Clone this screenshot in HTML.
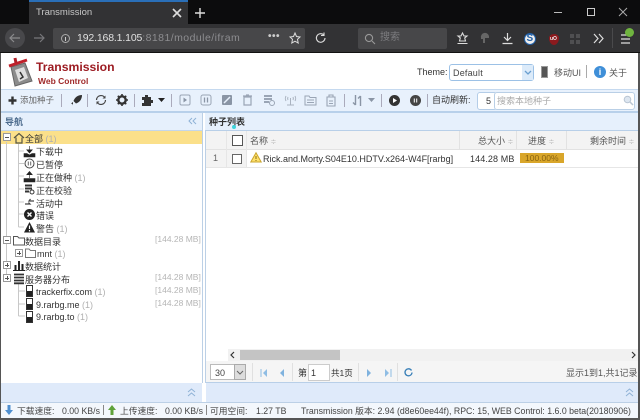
<!DOCTYPE html>
<html><head><meta charset="utf-8"><style>
html,body{margin:0;padding:0;background:#fff}
#p{position:relative;width:640px;height:420px;overflow:hidden;background:#fff;font-family:"Liberation Sans","Noto Sans CJK SC",sans-serif;font-size:9px;color:#333;filter:blur(.35px)}
.a{position:absolute}
.t{position:absolute;white-space:nowrap;line-height:12px}
.g{color:#b0b0b0}
.r{font-size:9px;color:#333}
.m{font-size:8.5px;color:#b5b5b5}
.s{font-size:8.75px;color:#444;top:405px}
svg{position:absolute;overflow:visible}
.sep{position:absolute;width:1px;height:13px;top:94px;background:#aab}
.b{position:absolute;width:6px;height:6px;border:1px solid #999;background:#fff}
.b::after{content:"";position:absolute;left:1px;top:2.5px;width:4px;height:1px;background:#555}
.c::before{content:"";position:absolute;left:2.5px;top:1px;width:1px;height:4px;background:#555}
</style></head><body><div id="p">
<!-- browser chrome -->
<div class="a" style="left:0;top:0;width:640px;height:24px;background:#0c0c0d"></div>
<div class="a" style="left:29px;top:0;width:159px;height:24px;background:#323234"></div>
<div class="a" style="left:29px;top:0;width:159px;height:2px;background:#2a6fb8"></div>
<div class="t" style="left:36px;top:7px;color:#c8c8c8;font-size:9.5px">Transmission</div>
<svg style="left:172px;top:8px" width="10" height="10"><path d="M1 1L9 9M9 1L1 9" stroke="#ddd" stroke-width="1.6"/></svg>
<svg style="left:194px;top:7px" width="12" height="12"><path d="M6 1V11M1 6H11" stroke="#ddd" stroke-width="1.4"/></svg>
<div class="a" style="left:554px;top:12px;width:8px;height:1px;background:#bbb"></div>
<div class="a" style="left:587px;top:8px;width:6px;height:6px;border:1px solid #ccc"></div>
<svg style="left:619px;top:8px" width="8" height="8"><path d="M0 0L8 8M8 0L0 8" stroke="#aaa" stroke-width="1"/></svg>
<div class="a" style="left:0;top:24px;width:640px;height:29px;background:#323234"></div>
<div class="a" style="left:0;top:52px;width:640px;height:1px;background:#111"></div>
<div class="a" style="left:5px;top:28px;width:20px;height:20px;border-radius:50%;background:#48484b"></div>
<svg style="left:9px;top:32px" width="12" height="12"><path d="M11 6H1M5 2L1 6L5 10" fill="none" stroke="#8a8a8c" stroke-width="1.2"/></svg>
<svg style="left:33px;top:32px" width="12" height="12"><path d="M1 6H11M7 2L11 6L7 10" fill="none" stroke="#77777a" stroke-width="1.2"/></svg>
<div class="a" style="left:53px;top:28px;width:252px;height:21px;background:#474749;border-radius:2px"></div>
<svg style="left:60px;top:33px" width="11" height="11"><circle cx="5.5" cy="5.5" r="4" fill="none" stroke="#aaa"/><path d="M5.5 4V8" stroke="#ccc"/></svg>
<div class="t" style="left:77px;top:32px;font-size:10.5px;color:#e0e0e0"><span style="letter-spacing:-.15px">192.168.1.105</span><span style="color:#8d8d90;letter-spacing:.45px">:8181/module/ifram</span></div>
<div class="t" style="left:268px;top:31px;font-size:10px;color:#ccc;letter-spacing:.5px;font-weight:bold">•••</div>
<svg style="left:289px;top:32px" width="12" height="12"><path d="M6 1L7.5 4.5L11 5L8.5 7.3L9.2 11L6 9.2L2.8 11L3.5 7.3L1 5L4.5 4.5Z" fill="none" stroke="#ddd"/></svg>
<svg style="left:315px;top:32px" width="12" height="12"><path d="M10 6A4.3 4.3 0 1 1 8.5 2.7M9 .5V3.5H6" fill="none" stroke="#ddd" stroke-width="1.1"/></svg>
<div class="a" style="left:358px;top:28px;width:89px;height:21px;background:#474749;border-radius:2px"></div>
<svg style="left:364px;top:33px" width="12" height="12"><circle cx="5" cy="5" r="3.6" fill="none" stroke="#999" stroke-width="1.1"/><path d="M8 8L11 11" stroke="#999" stroke-width="1.1"/></svg>
<div class="t" style="left:380px;top:32px;color:#7c7c7f;font-size:10px">搜索</div>
<svg style="left:456px;top:32px" width="13" height="13"><path d="M6.5 1L8 4H11L8.7 6L9.5 9H3.5L4.3 6L2 4H5ZM1.5 11.5H11.5" fill="none" stroke="#ddd" stroke-width="1.1"/></svg>
<svg style="left:479px;top:32px" width="12" height="13"><path d="M2 6A4 4 0 0 1 10 4V6H6V11H4V7H2Z" fill="#666"/></svg>
<svg style="left:501px;top:32px" width="13" height="13"><path d="M6.5 1V8M3 5L6.5 8.5L10 5M1.5 11.5H11.5" fill="none" stroke="#ddd" stroke-width="1.2"/></svg>
<div class="a" style="left:524px;top:33px;width:12px;height:12px;border-radius:50%;background:#eee;border:1px solid #1f5fa8;box-sizing:border-box"></div>
<div class="t" style="left:526.5px;top:33px;font-weight:bold;font-size:10px;color:#1f5fa8">S</div>
<div class="a" style="left:549px;top:34px;width:10px;height:11px;border-radius:50% 50% 50% 50%/35% 35% 65% 65%;background:#8b1a1e"></div>
<div class="t" style="left:550px;top:33px;font-size:5px;color:#eee;font-weight:bold">uO</div>
<div class="a" style="left:570px;top:34px;width:4px;height:4px;background:#4f4f51;box-shadow:6px 0 #4f4f51,0 6px #4f4f51,6px 6px #4f4f51"></div>
<svg style="left:593px;top:33px" width="11" height="11"><path d="M1 1L5 5.5L1 10M6 1L10 5.5L6 10" fill="none" stroke="#ddd" stroke-width="1.2"/></svg>
<div class="a" style="left:612px;top:28px;width:1px;height:20px;background:#4a4a4c"></div>
<svg style="left:621px;top:33px" width="10" height="12"><path d="M0 2H9M0 6H9M0 10H9" stroke="#ddd" stroke-width="1.2"/></svg>
<div class="a" style="left:625px;top:28px;width:9px;height:9px;border-radius:50%;background:#6fb43f"></div>

<!-- frame -->
<div class="a" style="left:0;top:53px;width:1px;height:367px;background:#555"></div>
<div class="a" style="left:638px;top:53px;width:2px;height:367px;background:#555"></div>
<div class="a" style="left:0;top:418px;width:640px;height:2px;background:#555"></div>

<!-- logo -->
<svg style="left:7px;top:57px" width="26" height="30" viewBox="0 0 26 30">
<path d="M4 10L18 6L25 24L8 29Z" fill="#8c8c8c" stroke="#666"/>
<path d="M8 13L17 10L21 21L12 25Z" fill="#dedede"/>
<path d="M13 15L16 20L13 22" fill="none" stroke="#333" stroke-width="1.5"/>
<path d="M2 9L20 3" stroke="#c0202a" stroke-width="3"/>
<path d="M9 6L8 1" stroke="#b02028" stroke-width="3"/>
</svg>
<div class="t" style="left:36px;top:60px;font-size:12.2px;line-height:15px;font-weight:bold;color:#9c1b22">Transmission</div>
<div class="t" style="left:38px;top:75px;font-size:8.5px;font-weight:bold;color:#a02a2a">Web Control</div>
<div class="t" style="left:417px;top:66px;font-size:9px;color:#333">Theme:</div>
<div class="a" style="left:449px;top:64px;width:85px;height:17px;box-sizing:border-box;border:1px solid #9cc1e6;border-radius:3px;background:#fff"></div>
<div class="t" style="left:453px;top:67px;font-size:9px;letter-spacing:.2px;color:#444">Default</div>
<div class="a" style="left:522px;top:65px;width:11px;height:15px;background:#dcebfa"></div>
<svg style="left:524px;top:70px" width="8" height="6"><path d="M1 1L4 4L7 1" fill="none" stroke="#6a9fd0" stroke-width="1.3"/></svg>
<div class="a" style="left:541px;top:66px;width:7px;height:12px;background:#555;border:1px solid #999;box-sizing:border-box"></div>
<div class="t" style="left:554px;top:67px;font-size:9px;color:#555">移动UI</div>
<div class="a" style="left:586px;top:65px;width:1px;height:13px;background:#aaa"></div>
<div class="a" style="left:594px;top:66px;width:12px;height:12px;border-radius:50%;background:#3f8fd8;color:#fff;font-size:9px;line-height:12px;text-align:center;font-weight:bold">i</div>
<div class="t" style="left:609px;top:67px;font-size:9px;color:#555">关于</div>

<!-- toolbar -->
<div class="a" style="left:1px;top:89px;width:637px;height:24px;background:#e8f1fc;border-top:1px solid #c5d9ef;border-bottom:2px solid #b8d0ea;box-sizing:border-box"></div>
<svg style="left:8px;top:96px" width="9" height="9"><path d="M4.5 .5V8.5M.5 4.5H8.5" stroke="#333" stroke-width="2.4"/></svg>
<div class="t" style="left:20px;top:94px;font-size:8.5px;color:#666">添加种子</div>
<div class="sep" style="left:61px"></div>
<svg style="left:70px;top:94px" width="13" height="13"><path d="M12 1C8 1 5 3 3.5 7L6 9.5C10 8 12 5 12 1ZM3 8L1 9.5L2.5 10L3 11.5Z" fill="#333"/></svg>
<div class="sep" style="left:87px"></div>
<svg style="left:95px;top:94px" width="12" height="12"><path d="M1.500 6A4.500 4.500 0 0 1 10 4M10.500 6A4.500 4.500 0 0 1 2 8" fill="none" stroke="#444" stroke-width="1.2"/><path d="M10.500 1.500V4.500H7.500M1.500 10.500V7.500H4.500" fill="#444"/></svg>
<svg style="left:116px;top:94px" width="12" height="12"><circle cx="6" cy="6" r="3.7" fill="none" stroke="#333" stroke-width="2.4"/><path d="M6 0V12M0 6H12M1.800 1.800L10.200 10.200M10.200 1.800L1.800 10.200" stroke="#333" stroke-width="1.6" stroke-dasharray="2 8 2 0"/></svg>
<div class="sep" style="left:134px"></div>
<svg style="left:141px;top:94px" width="12" height="12"><path d="M1 3H4V1H7V3H10V6H12V9H10V12H1V9H3V6H1Z" fill="#333"/></svg>
<svg style="left:158px;top:98px" width="7" height="4"><path d="M0 0H7L3.5 4Z" fill="#222"/></svg>
<div class="sep" style="left:171px"></div>
<svg style="left:179px;top:94px" width="12" height="12"><rect x="1" y="1" width="10" height="10" rx="1.5" fill="none" stroke="#9aa5b5"/><path d="M4.500 3.500L8 6L4.500 8.500Z" fill="#8a95a5"/></svg>
<svg style="left:200px;top:94px" width="12" height="12"><rect x="1" y="1" width="10" height="10" rx="2" fill="none" stroke="#9aa5b5"/><path d="M4.500 3.500V8.500M7.500 3.500V8.500" stroke="#8a95a5" stroke-width="1.3"/></svg>
<svg style="left:221px;top:94px" width="12" height="12"><rect x="1" y="1" width="10" height="10" rx="1" fill="#8a95a5"/><path d="M3 9L9 3" stroke="#e8f1fc" stroke-width="1.5"/></svg>
<svg style="left:242px;top:94px" width="11" height="12"><path d="M2 3H9V11H2ZM1 2H10M4 1H7" fill="none" stroke="#9aa5b5" stroke-width="1.2"/></svg>
<svg style="left:263px;top:94px" width="13" height="13"><path d="M1 2H9M1 5H9M1 8H6" stroke="#9aa5b5" stroke-width="2"/><circle cx="9" cy="9" r="2.5" fill="none" stroke="#9aa5b5"/></svg>
<svg style="left:284px;top:94px" width="13" height="13"><path d="M6.500 4V11M3 11H10M2 2C1 4 1 5 2 7M11 2C12 4 12 5 11 7M4 3C3.500 4 3.500 5 4 6M9 3C9.500 4 9.500 5 9 6" fill="none" stroke="#aab3c0"/></svg>
<svg style="left:304px;top:94px" width="13" height="13"><path d="M1 2H5L6 3.500H12V11H1ZM3 6H10M3 8.500H10" fill="none" stroke="#9aa5b5"/></svg>
<svg style="left:325px;top:94px" width="12" height="13"><path d="M2 3H10V12H2ZM4 3V1H8V3M4 7H8M4 9.500H8" fill="none" stroke="#9aa5b5" stroke-width="1.1"/></svg>
<div class="sep" style="left:344px"></div>
<svg style="left:352px;top:94px" width="12" height="13"><path d="M3.500 1V11M1 8.500L3.500 11M8.500 12V2M6 4.500L8.500 2" fill="none" stroke="#8a95a5" stroke-width="1.4"/></svg>
<svg style="left:368px;top:98px" width="7" height="4"><path d="M0 0H7L3.5 4Z" fill="#8a95a5"/></svg>
<div class="sep" style="left:381px"></div>
<div class="a" style="left:389px;top:95px;width:11px;height:11px;border-radius:50%;background:#333"></div>
<svg style="left:389px;top:95px" width="11" height="11"><path d="M4 3L8 5.500L4 8Z" fill="#fff"/></svg>
<div class="a" style="left:410px;top:95px;width:11px;height:11px;border-radius:50%;background:#444"></div>
<svg style="left:410px;top:95px" width="11" height="11"><path d="M4.300 3.500V7.500M6.700 3.500V7.500" stroke="#fff"/></svg>
<div class="sep" style="left:427px"></div>
<div class="t" style="left:432px;top:94px;font-size:9px;color:#333">自动刷新:</div>
<div class="a" style="left:477px;top:92px;width:20px;height:18px;box-sizing:border-box;border:1px solid #b4cde8;border-radius:3px;background:#fff"></div>
<div class="t" style="left:486px;top:95px;font-size:9px">5</div>
<div class="a" style="left:494px;top:92px;width:141px;height:18px;box-sizing:border-box;border:1px solid #b9cfe6;border-radius:3px;background:#fff"></div>
<div class="t" style="left:497px;top:95px;font-size:9px;color:#aaa">搜索本地种子</div>
<svg style="left:623px;top:95px" width="11" height="11"><circle cx="4.5" cy="4.5" r="3.3" fill="#dde6f0" stroke="#b8c5d3"/><path d="M7 7L10 10" stroke="#b8c5d3" stroke-width="1.5"/></svg>

<!-- left panel -->
<div class="a" style="left:1px;top:113px;width:201px;height:17px;background:#e6f0fc"></div>
<div class="t" style="left:5px;top:116px;font-size:9px;font-weight:bold;color:#4b6a8c">导航</div>
<svg style="left:188px;top:117px" width="9" height="8"><path d="M4 1L1 4L4 7M8 1L5 4L8 7" fill="none" stroke="#8fb2d6"/></svg>
<div class="a" style="left:1px;top:130px;width:201px;height:1px;background:#c4d6ea"></div>
<div class="a" style="left:1px;top:131px;width:201px;height:13px;background:#fbe08a"></div>
<div class="a" style="left:202px;top:113px;width:1px;height:270px;background:#bcd0e6"></div>
<svg style="left:0;top:0" width="100" height="330"><path d="M6.500 142V278M18.500 144V227M18.500 151H24M18.500 163.500H24M18.500 176H24M18.500 189H24M18.500 202H24M18.500 214H24M18.500 227H24M18.500 284V316M18.500 291H25M18.500 304H25M18.500 316H25" fill="none" stroke="#c8c8c8" stroke-width="1"/></svg>
<div class="b" style="left:3px;top:133px"></div>
<svg style="left:13px;top:132px" width="12" height="12"><path d="M1 6L6 1.500L11 6M3 5.500V11H9V5.500" fill="none" stroke="#554" stroke-width="1.2"/></svg>
<div class="t r" style="left:25px;top:133px">全部 <span class="g">(1)</span></div>

<svg style="left:24px;top:146px" width="11" height="11"><path d="M5.500 0V6M2.500 3.500L5.500 7L8.500 3.500M0 7.500H3L5.500 9L8 7.500H11V11H0Z" fill="#222" stroke="#222" stroke-width=".6"/></svg>
<div class="t r" style="left:36px;top:146px">下载中</div>
<svg style="left:24px;top:158px" width="11" height="11"><circle cx="5.5" cy="5.5" r="4.5" fill="#fff" stroke="#444"/><path d="M4.300 3.500V7.500M6.700 3.500V7.500" stroke="#666"/></svg>
<div class="t r" style="left:36px;top:159px">已暂停</div>
<svg style="left:24px;top:171px" width="11" height="11"><path d="M5.500 7V1M2.500 4L5.500 .5L8.500 4M0 7.500H11V11H0Z" fill="#222" stroke="#222" stroke-width=".6"/></svg>
<div class="t r" style="left:36px;top:172px">正在做种 <span class="g">(1)</span></div>
<svg style="left:24px;top:184px" width="11" height="11"><path d="M1 1.500H8M1 4.500H8M1 7.500H5" stroke="#333" stroke-width="2"/><circle cx="8" cy="8" r="2" fill="#fff" stroke="#333"/></svg>
<div class="t r" style="left:36px;top:185px">正在校验</div>
<svg style="left:24px;top:197px" width="11" height="11"><path d="M1 7H6L4.500 5.500M10 4H5L6.500 2" fill="none" stroke="#444" stroke-width="1.2"/></svg>
<div class="t r" style="left:36px;top:198px">活动中</div>
<div class="a" style="left:24px;top:209px;width:11px;height:11px;border-radius:50%;background:#222"></div>
<svg style="left:24px;top:209px" width="11" height="11"><path d="M3.500 3.500L7.500 7.500M7.500 3.500L3.500 7.500" stroke="#fff" stroke-width="1.4"/></svg>
<div class="t r" style="left:36px;top:210px">错误</div>
<svg style="left:24px;top:222px" width="11" height="11"><path d="M5.500 0L11 10.500H0Z" fill="#222"/><path d="M5.500 3.500V7M5.500 8V9.500" stroke="#fff" stroke-width="1.2"/></svg>
<div class="t r" style="left:36px;top:223px">警告 <span class="g">(1)</span></div>

<div class="b" style="left:3px;top:236px"></div>
<svg style="left:13px;top:235px" width="12" height="11"><path d="M.5 1.500H4.500L6 3H11.500V10H.5Z" fill="#fff" stroke="#555"/></svg>
<div class="t r" style="left:25px;top:236px">数据目录</div>
<div class="t m" style="left:155px;top:233px">[144.28 MB]</div>
<div class="b c" style="left:15px;top:249px"></div>
<svg style="left:25px;top:248px" width="11" height="10"><path d="M.5 1H4L5.500 2.500H10.500V9.500H.5Z" fill="#fff" stroke="#777"/></svg>
<div class="t r" style="left:37px;top:248px">mnt <span class="g">(1)</span></div>
<div class="b c" style="left:3px;top:261px"></div>
<svg style="left:13px;top:260px" width="12" height="11"><path d="M2.500 5V10M6 1V10M9.500 4V10" stroke="#222" stroke-width="2"/><path d="M0 10.500H12" stroke="#222"/></svg>
<div class="t r" style="left:25px;top:261px">数据统计</div>
<div class="b c" style="left:3px;top:274px"></div>
<svg style="left:14px;top:273px" width="10" height="11"><path d="M0 1.500H10M0 4.500H10M0 7.500H10M0 10.300H10" stroke="#333" stroke-width="1.8"/></svg>
<div class="t r" style="left:25px;top:274px">服务器分布</div>
<div class="t m" style="left:155px;top:271px">[144.28 MB]</div>
<svg style="left:26px;top:285px" width="7" height="12"><rect x=".5" y=".5" width="6" height="11" fill="#fff" stroke="#333"/><rect x="1" y="6" width="5" height="5" fill="#222"/></svg>
<div class="t r" style="left:36px;top:286px">trackerfix.com <span class="g">(1)</span></div>
<div class="t m" style="left:155px;top:284px">[144.28 MB]</div>
<svg style="left:26px;top:298px" width="7" height="12"><rect x=".5" y=".5" width="6" height="11" fill="#fff" stroke="#333"/><rect x="1" y="6" width="5" height="5" fill="#222"/></svg>
<div class="t r" style="left:36px;top:299px">9.rarbg.me <span class="g">(1)</span></div>
<div class="t m" style="left:155px;top:297px">[144.28 MB]</div>
<svg style="left:26px;top:311px" width="7" height="12"><rect x=".5" y=".5" width="6" height="11" fill="#fff" stroke="#333"/><rect x="1" y="6" width="5" height="5" fill="#222"/></svg>
<div class="t r" style="left:36px;top:311px">9.rarbg.to <span class="g">(1)</span></div>

<!-- right panel -->
<div class="a" style="left:205px;top:113px;width:433px;height:17px;background:#e6f0fc"></div>
<div class="t" style="left:209px;top:116px;font-size:9px;font-weight:bold;color:#333">种子列表</div>
<div class="a" style="left:232px;top:125px;width:4px;height:4px;border-radius:50%;background:#3ed4dc"></div>
<div class="a" style="left:205px;top:130px;width:433px;height:1px;background:#b8cfe8"></div>
<div class="a" style="left:205px;top:131px;width:1px;height:252px;background:#bcd0e6"></div>
<!-- table header -->
<div class="a" style="left:206px;top:131px;width:432px;height:19px;background:#f3f3f3;border-bottom:1px solid #e2e2e2;box-sizing:border-box"></div>
<div class="a" style="left:206px;top:150px;width:40px;height:17px;background:#f3f3f3"></div>
<div class="a" style="left:206px;top:167px;width:432px;height:1px;background:#e6e6e6"></div>
<div class="a" style="left:226px;top:131px;width:1px;height:36px;background:#e6e6e6"></div>
<div class="a" style="left:246px;top:131px;width:1px;height:36px;background:#e6e6e6"></div>
<div class="a" style="left:459px;top:131px;width:1px;height:19px;background:#e2e2e2"></div>
<div class="a" style="left:516px;top:131px;width:1px;height:19px;background:#e2e2e2"></div>
<div class="a" style="left:566px;top:131px;width:1px;height:19px;background:#e2e2e2"></div>
<div class="a" style="left:232px;top:135px;width:9px;height:9px;border:1px solid #555;background:#fff"></div>
<div class="a" style="left:232px;top:154px;width:8px;height:8px;border:1px solid #666;background:#fff"></div>
<div class="t" style="left:250px;top:135px;font-size:9px;color:#555">名称 <span style="color:#bbb;font-size:7px">≑</span></div>
<div class="t" style="left:478px;top:135px;font-size:9px;color:#555">总大小 <span style="color:#bbb;font-size:7px">≑</span></div>
<div class="t" style="left:528px;top:135px;font-size:9px;color:#555">进度 <span style="color:#bbb;font-size:7px">≑</span></div>
<div class="t" style="left:590px;top:135px;font-size:9px;color:#555">剩余时间 <span style="color:#bbb;font-size:7px">≑</span></div>
<div class="t" style="left:213px;top:152px;font-size:9px;color:#666">1</div>
<svg style="left:250px;top:152px" width="12" height="11"><path d="M6 .8L11.200 10H.8Z" fill="#ffe16b" stroke="#caa42c"/><path d="M6 4V7M6 8V9" stroke="#8a6d10"/></svg>
<div class="t" style="left:263px;top:153px;font-size:9px;color:#333">Rick.and.Morty.S04E10.HDTV.x264-W4F[rarbg]</div>
<div class="t" style="left:470px;top:153px;font-size:9px;color:#333;letter-spacing:.1px">144.28 MB</div>
<div class="a" style="left:520px;top:153px;width:44px;height:10px;background:#d9a62a"></div>
<div class="t" style="left:525px;top:152px;font-size:8.5px;color:#8a6410">100.00%</div>

<!-- scrollbar -->
<div class="a" style="left:228px;top:349px;width:410px;height:12px;background:#f1f1f1"></div>
<div class="a" style="left:240px;top:350px;width:100px;height:10px;background:#c4c4c4"></div>
<svg style="left:230px;top:352px" width="5" height="6"><path d="M4 0L1 3L4 6" fill="none" stroke="#333" stroke-width="1.2"/></svg>
<svg style="left:631px;top:352px" width="5" height="6"><path d="M1 0L4 3L1 6" fill="none" stroke="#333" stroke-width="1.2"/></svg>
<!-- pager -->
<div class="a" style="left:206px;top:361px;width:432px;height:22px;background:#f5f5f5;border-bottom:1px solid #b8cfe8;box-sizing:border-box"></div>
<div class="a" style="left:210px;top:364px;width:36px;height:16px;box-sizing:border-box;border:1px solid #bbb;background:#fff"></div>
<div class="t" style="left:215px;top:367px;font-size:9px;color:#444">30</div>
<div class="a" style="left:234px;top:364px;width:12px;height:16px;box-sizing:border-box;border:1px solid #aaa;background:#ddd"></div>
<svg style="left:236px;top:370px" width="8" height="5"><path d="M1 1L4 4L7 1" fill="none" stroke="#666"/></svg>
<div class="a" style="left:252px;top:363px;width:1px;height:18px;background:#e0e0e0"></div>
<svg style="left:260px;top:369px" width="8" height="8"><path d="M1 0V8" stroke="#8fbde4"/><path d="M7 0V8L3 4Z" fill="#8fbde4"/></svg>
<svg style="left:279px;top:369px" width="6" height="8"><path d="M5 0V8L1 4Z" fill="#7fb2de"/></svg>
<div class="a" style="left:292px;top:363px;width:1px;height:18px;background:#e0e0e0"></div>
<div class="t" style="left:298px;top:367px;font-size:9px">第</div>
<div class="a" style="left:308px;top:364px;width:22px;height:17px;box-sizing:border-box;border:1px solid #ccc;background:#fff"></div>
<div class="t" style="left:311px;top:367px;font-size:9px">1</div>
<div class="t" style="left:331px;top:367px;font-size:8.5px">共1页</div>
<div class="a" style="left:358px;top:363px;width:1px;height:18px;background:#e0e0e0"></div>
<svg style="left:366px;top:369px" width="6" height="8"><path d="M1 0V8L5 4Z" fill="#7fb2de"/></svg>
<svg style="left:384px;top:369px" width="8" height="8"><path d="M1 0V8L5 4Z" fill="#8fbde4"/><path d="M7 0V8" stroke="#8fbde4"/></svg>
<div class="a" style="left:397px;top:363px;width:1px;height:18px;background:#e0e0e0"></div>
<svg style="left:404px;top:368px" width="9" height="9"><path d="M7.500 2.500A3.500 3.500 0 1 0 8 4.500" fill="none" stroke="#3a80b8" stroke-width="1.3"/></svg>
<div class="t" style="left:566px;top:367px;font-size:9px;color:#555">显示1到1,共1记录</div>

<!-- bottom collapsed bars -->
<div class="a" style="left:1px;top:383px;width:201px;height:19px;background:#dfeafa"></div>
<div class="a" style="left:206px;top:383px;width:432px;height:19px;background:#dfeafa"></div>
<svg style="left:187px;top:388px" width="9" height="9"><path d="M1 4L4.500 1L8 4M1 8L4.500 5L8 8" fill="none" stroke="#8fb2d6"/></svg>
<svg style="left:625px;top:388px" width="9" height="9"><path d="M1 4L4.500 1L8 4M1 8L4.500 5L8 8" fill="none" stroke="#8fb2d6"/></svg>
<!-- status -->
<div class="a" style="left:1px;top:402px;width:637px;height:16px;background:#f3f7fc;border-top:1px solid #bcd0e6;box-sizing:border-box"></div>
<svg style="left:5px;top:405px" width="8" height="10"><path d="M2.500 0H5.500V5H8L4 10L0 5H2.500Z" fill="#4f8fcf"/></svg>
<div class="t s" style="left:17px">下载速度:</div>
<div class="t s" style="left:62px">0.00 KB/s</div>
<div class="a" style="left:103px;top:405px;width:1px;height:10px;background:#888"></div>
<svg style="left:108px;top:405px" width="8" height="10"><path d="M2.500 10H5.500V5H8L4 0L0 5H2.500Z" fill="#5fa23a"/></svg>
<div class="t s" style="left:120px">上传速度:</div>
<div class="t s" style="left:165px">0.00 KB/s</div>
<div class="a" style="left:206px;top:405px;width:1px;height:10px;background:#888"></div>
<div class="t s" style="left:210px">可用空间:</div>
<div class="t s" style="left:256px">1.27 TB</div>
<div class="t s" style="left:301px">Transmission 版本: 2.94 (d8e60ee44f), RPC: 15, WEB Control: 1.6.0 beta(20180906)</div>
</div></body></html>
